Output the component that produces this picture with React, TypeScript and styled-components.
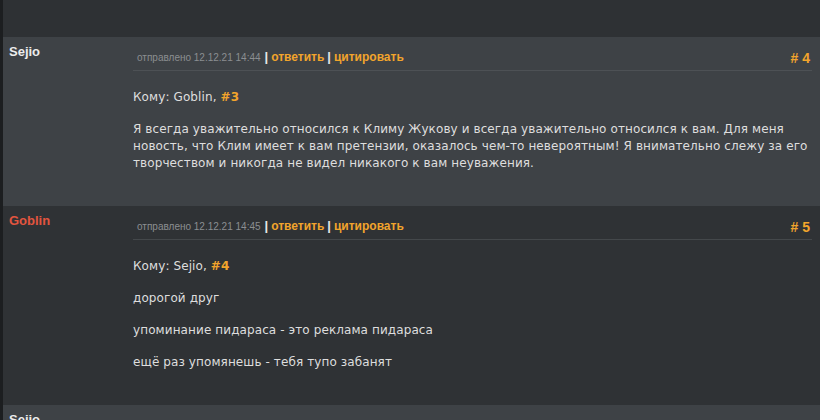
import styled, { createGlobalStyle } from 'styled-components';

interface IPost {
  id: number;
  author: string;
  isModer?: boolean;
  sent: string;
  toName: string;
  toId: number;
  lines: string[];
}

const posts: IPost[] = [
  {
    id: 4,
    author: 'Sejio',
    sent: '12.12.21 14:44',
    toName: 'Goblin',
    toId: 3,
    lines: [
      'Я всегда уважительно относился к Климу Жукову и всегда уважительно относился к вам. Для меня новость, что Клим имеет к вам претензии, оказалось чем-то невероятным! Я внимательно слежу за его творчеством и никогда не видел никакого к вам неуважения.',
    ],
  },
  {
    id: 5,
    author: 'Goblin',
    isModer: true,
    sent: '12.12.21 14:45',
    toName: 'Sejio',
    toId: 4,
    lines: [
      'дорогой друг',
      'упоминание пидараса - это реклама пидараса',
      'ещё раз упомянешь - тебя тупо забанят',
    ],
  },
  {
    id: 6,
    author: 'Sejio',
    sent: '12.12.21 14:47',
    toName: 'Goblin',
    toId: 5,
    lines: ['понял, больше не буду'],
  },
];

const App = () => {
  return (
    <>
      <GlobalStyle />
      <Page>
        <TopBar />
        {posts.map((post, i) => (
          <Post key={post.id} $alt={i % 2 === 0}>
            <Author $moder={post.isModer}>{post.author}</Author>
            <Content>
              <Header $alt={i % 2 === 0}>
                <Meta>
                  <Sent>отправлено {post.sent}</Sent>
                  <Sep>|</Sep>
                  <Action href='#'>ответить</Action>
                  <Sep>|</Sep>
                  <Action href='#'>цитировать</Action>
                </Meta>
                <Num>#&nbsp;{post.id}</Num>
              </Header>
              <Body>
                <P>
                  Кому: {post.toName}, <Ref>#{post.toId}</Ref>
                </P>
                {post.lines.map((line, j) => (
                  <P key={j}>{line}</P>
                ))}
              </Body>
            </Content>
          </Post>
        ))}
      </Page>
    </>
  );
};

export default App;

const GlobalStyle = createGlobalStyle`
  html, body {
    margin: 0;
    padding: 0;
    overflow: hidden;
    background-color: #2e3134;
  }
  * {
    box-sizing: border-box;
  }
`;

const Page = styled.div`
  border-left: 3px solid #1c1e20;
  min-height: 420px;
  background-color: #2e3134;
`;

const TopBar = styled.div`
  height: 37px;
  background-color: #2e3134;
`;

const Post = styled.div<{ $alt: boolean }>`
  display: grid;
  grid-template-columns: 130px 1fr;
  background-color: ${(p) => (p.$alt ? '#3e4246' : '#2f3235')};
`;

const Author = styled.div<{ $moder?: boolean }>`
  padding: 7px 0 0 6px;
  font-family: 'Liberation Sans', Arial, sans-serif;
  font-size: 13px;
  font-weight: 700;
  line-height: 15px;
  color: ${(p) => (p.$moder ? '#e2553f' : '#ececec')};
`;

const Content = styled.div`
  padding-right: 8px;
`;

const Header = styled.div<{ $alt: boolean }>`
  height: 34px;
  display: flex;
  align-items: flex-end;
  justify-content: space-between;
  padding: 0 4px 5px 4px;
  border-bottom: 1px solid ${(p) => (p.$alt ? '#4d5155' : '#44484b')};
  font-family: 'Liberation Sans', Arial, sans-serif;
  line-height: 14px;
`;

const Meta = styled.div`
  display: flex;
  align-items: baseline;
`;

const Sent = styled.span`
  font-size: 10px;
  color: #8b8e91;
  margin-right: 1px;
`;

const Sep = styled.span`
  margin: 0 3px;
  font-size: 13px;
  font-weight: 700;
  color: #e6e6e6;
`;

const Action = styled.a`
  font-size: 12px;
  font-weight: 700;
  color: #f2a42c;
  text-decoration: none;
`;

const Num = styled.span`
  font-size: 14px;
  font-weight: 700;
  color: #f2a42c;
  margin-right: -2px;
`;

const Body = styled.div`
  padding: 18px 0 34px 0;
  font-family: 'DejaVu Sans', Verdana, sans-serif;
  font-size: 12px;
  letter-spacing: 0.1px;
  line-height: 17px;
  color: #dedede;
`;

const P = styled.p`
  margin: 0 0 15px 0;
  &:last-child {
    margin-bottom: 0;
  }
`;

const Ref = styled.span`
  font-weight: 700;
  color: #f2a42c;
`;
